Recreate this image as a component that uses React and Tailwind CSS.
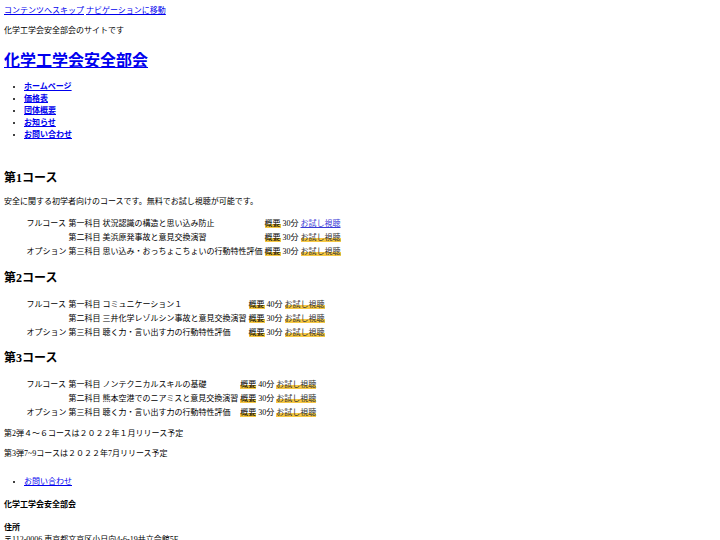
const courses = [
  {
    title: '第1コース',
    intro: '安全に関する初学者向けのコースです。無料でお試し視聴が可能です。',
    rows: [
      ['フルコース', '第一科目', '状況認識の構造と思い込み防止', '30分', true],
      ['', '第二科目', '美浜原発事故と意見交換演習', '30分', false],
      ['オプション', '第三科目', '思い込み・おっちょこちょいの行動特性評価', '30分', false],
    ],
  },
  {
    title: '第2コース',
    rows: [
      ['フルコース', '第一科目', 'コミュニケーション１', '40分', false],
      ['', '第二科目', '三井化学レゾルシン事故と意見交換演習', '30分', false],
      ['オプション', '第三科目', '聴く力・言い出す力の行動特性評価', '30分', false],
    ],
  },
  {
    title: '第3コース',
    rows: [
      ['フルコース', '第一科目', 'ノンテクニカルスキルの基礎', '40分', false],
      ['', '第二科目', '熊本空港でのニアミスと意見交換演習', '30分', false],
      ['オプション', '第三科目', '聴く力・言い出す力の行動特性評価', '30分', false],
    ],
  },
]

const marker = 'bg-[linear-gradient(transparent_55%,#f7c843_55%)]'

function CourseTable({ rows, className }) {
  return (
    <table className={`ml-[21px] border-separate border-spacing-[1px] ${className}`}>
      <tbody>
        {rows.map((r, i) => (
          <tr key={i}>
            <td className="p-[0.5px]">{r[0]}</td>
            <td className="p-[0.5px]">{r[1]}</td>
            <td className="p-[0.5px]">{r[2]}</td>
            <td className="p-[0.5px] whitespace-nowrap">
              <span className={marker}>概要</span> {r[3]}{' '}
              {r[4] ? (
                <a href="#" className="text-[#3b3bd6] underline">お試し視聴</a>
              ) : (
                <span className={`${marker} text-[#333]`}>お試し視聴</span>
              )}
            </td>
          </tr>
        ))}
      </tbody>
    </table>
  )
}

export default function App() {
  const font = "font-['Liberation_Serif','Noto_Sans_CJK_JP',serif]"
  return (
    <div className={`flex flex-col items-start px-[4px] pt-[5px] pb-[4px] bg-white text-black text-[8px] leading-[12px] ${font}`}>
      <div>
        <a href="#" className="text-[#0000ee] underline">コンテンツへスキップ</a>{' '}
        <a href="#" className="text-[#0000ee] underline">ナビゲーションに移動</a>
      </div>
      <p className="mt-[8px]">化学工学会安全部会のサイトです</p>
      <h1 className="mt-[12px] text-[16px] leading-[24px] font-bold">
        <a href="#" className="text-[#0000ee] underline">化学工学会安全部会</a>
      </h1>
      <ul className="mt-[8px] list-disc pl-[20px] font-bold">
        {['ホームページ', '価格表', '団体概要', 'お知らせ', 'お問い合わせ'].map((t) => (
          <li key={t}>
            <a href="#" className="text-[#0000ee] underline">{t}</a>
          </li>
        ))}
      </ul>

      <h2 className="mt-[29px] text-[12px] leading-[17px] font-bold">{courses[0].title}</h2>
      <p className="mt-[9px]">{courses[0].intro}</p>
      <CourseTable rows={courses[0].rows} className="mt-[8px]" />

      <h2 className="mt-[11px] text-[12px] leading-[17px] font-bold">{courses[1].title}</h2>
      <CourseTable rows={courses[1].rows} className="mt-[10px]" />

      <h2 className="mt-[10px] text-[12px] leading-[17px] font-bold">{courses[2].title}</h2>
      <CourseTable rows={courses[2].rows} className="mt-[10px]" />

      <p className="mt-[8px]">第2弾４～６コースは２０２２年１月リリース予定</p>
      <p className="mt-[8px]">第3弾7~9コースは２０２２年7月リリース予定</p>

      <ul className="mt-[16px] list-disc pl-[20px]">
        <li>
          <a href="#" className="text-[#0000ee] underline">お問い合わせ</a>
        </li>
      </ul>
      <p className="mt-[11px] font-bold">化学工学会安全部会</p>
      <p className="mt-[11px]">
        <span className="font-bold">住所</span>
        <br />
        〒112-0006 東京都文京区小日向4-6-19共立会館5F
      </p>
    </div>
  )
}
